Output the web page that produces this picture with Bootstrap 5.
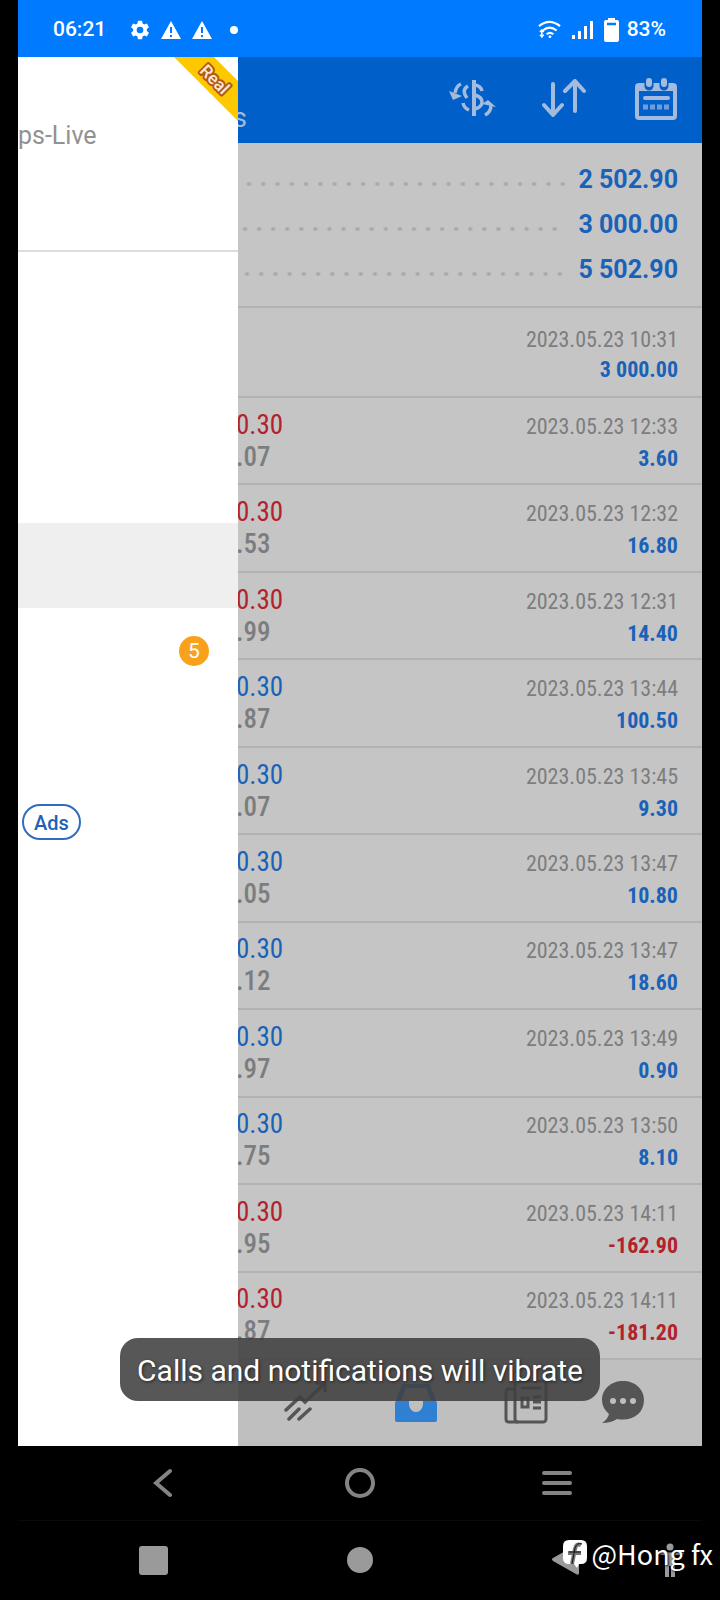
<!DOCTYPE html>
<html lang="en">
<head>
<meta charset="utf-8">
<meta name="viewport" content="width=device-width, initial-scale=1">
<title>History</title>
<link href="https://cdn.jsdelivr.net/npm/bootstrap@5.3.0/dist/css/bootstrap.min.css" rel="stylesheet">
<style>
body{background:#000;font-family:Roboto,"Noto Sans",sans-serif;min-height:100vh;padding:0}
.phone{min-height:100vh;margin:0 18px}
.status{background:#007aff;height:57px;padding:2px 36px 0 35px;color:#fff;font-size:21px;font-weight:500}
.status svg{flex:none}
.status .gap-icon{margin-left:11px}
.status .battery{margin-right:8px}
.app{background:#c5c5c5;overflow:hidden}
.topbar{background:#005fc8;height:86px;color:#a3bbdc}
.topbar .title{font-size:27px;margin:46px 0 0 215px;line-height:30px;font-weight:400}
.iconbtn{background:none;border:0;padding:0;color:inherit;display:flex;align-items:center;justify-content:center}
.topbar .iconbtn{width:92px;padding-bottom:4px}
.blue{color:#1a62b8}
.red{color:#b3222c}
.totals{padding:14px 24px 14px 220px;font-size:25px;font-weight:700;border-bottom:2px solid #b2b2b2}
.totals div{height:45px}
.leader{height:4px;margin-top:8px;background:radial-gradient(circle,#a8a8a8 0 1px,transparent 3px) 0 0/14px 4px space}
.lead-a{margin-left:4px;margin-right:8px}
.lead-b{margin-right:16px}
.lead-c{margin-left:2px;margin-right:11px}
.deals{font-family:"Roboto Condensed","Liberation Sans Narrow",Roboto,sans-serif;line-height:30px}
.deals li{flex:1 1 auto;padding:2px 24px 0 218px;border-bottom:2px solid #b2b2b2}
.deals li:first-child{flex:0 0 90px;padding-top:5px}
.lot{font-size:27px}
.price{font-size:27px;font-weight:500;color:#7c7d7f}
.when{font-size:22px;color:#7c7d7f}
.gain{font-size:22px;font-weight:700}
.tabs{background:#bfbfbf;height:86px;padding:0 37px 2px 233px;color:#555}
.tabs .iconbtn{width:110px}
.tabs .iconbtn:last-child{width:84px}
.drawer{left:0;top:0;bottom:0;width:220px;background:#fff;overflow:hidden}
.server{height:195px;border-bottom:2px solid #ddd;padding-top:64px;font-size:25px;line-height:30px;color:#929292}
.ribbon{top:0;right:0}
.menuitem{height:85px}
.chosen{background:#efefef}
.ads{width:59px;height:36px;margin-left:4px;margin-top:2px;padding-top:2px;border:2px solid #2f6dc0;border-radius:18px;color:#1f60b8;font-size:20px;font-weight:500;text-decoration:none}
.count{width:30px;height:30px;background:#f9a11b;color:#fff;font-size:21px;padding-top:2px;margin-right:29px}
.note{left:0;right:0;bottom:45px}
.note span{background:rgba(64,64,64,.88);color:#fff;font-size:30px;line-height:35px;padding:15px 17px 13px;border-radius:18px;text-shadow:1px 1px 3px #222;white-space:nowrap}
.sys{height:75px;padding:0 46px;color:#848484;border-bottom:1px solid #08080f}
.sys .iconbtn{flex:1}
.devicebar{margin:0 -18px}
.keys{height:79px;padding:0 34px 1px 139px;color:#9a9a9a}
.keys .person{margin-left:72px}
.wm{right:7px;bottom:26px;color:#fff;font:400 27px/40px "Noto Sans CJK SC",sans-serif;text-shadow:1px 1px 2px #000;gap:4px}
</style>
</head>
<body>
<div class="phone d-flex flex-column">
  <header class="status d-flex align-items-center">
    <span>06:21</span>
    <svg class="ms-4" width="20" height="20" viewBox="0 0 24 24" fill="#fff"><path fill-rule="evenodd" d="M9.500 1h5l.6 3.300 2 1.200 3.200-1.200 2.500 4.300-2.600 2.200v2.400l2.600 2.200-2.500 4.300-3.200-1.200-2 1.200-.6 3.300h-5l-.6-3.300-2-1.200-3.200 1.200-2.500-4.300 2.600-2.200v-2.400L1.200 8.600l2.500-4.300 3.200 1.200 2-1.200zM12 8a4 4 0 1 0 0 8 4 4 0 0 0 0-8z"/></svg>
    <svg class="gap-icon" width="20" height="20" viewBox="0 0 20 20"><path d="M10 1l10 18H0z" fill="#fff"/><path d="M10 7v6m0 2v2" stroke="#007aff" stroke-width="2"/></svg>
    <svg class="gap-icon" width="20" height="20" viewBox="0 0 20 20"><path d="M10 1l10 18H0z" fill="#fff"/><path d="M10 7v6m0 2v2" stroke="#007aff" stroke-width="2"/></svg>
    <svg class="ms-3" width="12" height="10"><circle cx="6" cy="5" r="4" fill="#fff"/></svg>
    <svg class="ms-auto" width="23" height="20" viewBox="0 0 24 20" fill="none" stroke="#fff" stroke-width="2.200"><path d="M1 6q11-9 22 0M5 10.500q7-6 14.500 0M9 14.500q3.500-3 7 0"/><path d="M4 10v8M2 12l2-2 2 2M2 15l2 2 2-2" stroke-width="1.600"/><circle cx="12.500" cy="17" r="1" fill="#fff" stroke-width="1"/></svg>
    <svg class="gap-icon" width="21" height="20" viewBox="0 0 21 20" fill="#fff"><path d="M0 15h3v4H0zM6 11h3v8H6zM12 6h3v13h-3zM18 1h3v18h-3z"/></svg>
    <svg class="gap-icon battery" width="15" height="24" viewBox="0 0 15 24"><path d="M4 0h7v2h2q2 0 2 2v18q0 2-2 2H2q-2 0-2-2V4q0-2 2-2h2z" fill="#fff"/><path d="M3 6h9" stroke="#007aff" stroke-width="2.500"/></svg>
    <span>83%</span>
  </header>

  <main class="app position-relative d-flex flex-column flex-grow-1">
    <div class="topbar d-flex">
      <h1 class="title me-auto">s</h1>
      <button class="iconbtn" aria-label="Symbols"><svg width="48" height="38" viewBox="0 0 48 38" fill="none" stroke="currentColor" stroke-width="4"><path d="M26 1v36"/><path d="M27 6q6 1 7 6M27 16q7 2 7 7t-7 7M20 7q-7 4-1 12M15 24q1 5 6 7" stroke-width="3.500"/><path d="M13 5q-5 2-6 9M37 36q6-3 6-10" stroke-width="3.500"/><path d="M1 12l13 5-9 4zM34 25l14 3-8-7z" fill="currentColor" stroke="none"/></svg></button>
      <button class="iconbtn" aria-label="Sort"><svg width="44" height="38" viewBox="0 0 44 38" fill="none" stroke="currentColor" stroke-width="4" stroke-linecap="round" stroke-linejoin="round"><path d="M11 5v31M2 26l9 10 9-10M33 32V3M23 12l10-10 9 10"/></svg></button>
      <button class="iconbtn" aria-label="Period"><svg width="42" height="44" viewBox="0 0 42 44" fill="none" stroke="currentColor"><rect x="2" y="9" width="38" height="33" rx="2" stroke-width="4"/><path d="M3 12h36" stroke-width="6"/><path d="M14 4v6M29 4v6" stroke="#005fc8" stroke-width="9" stroke-linecap="round"/><path d="M14 5v3M29 5v3" stroke-width="6" stroke-linecap="round"/><path d="M10 22h23" stroke-width="4" stroke-linecap="round"/><path d="M8 31h27" stroke="#6f9fdb" stroke-width="5" stroke-dasharray="5 2"/></svg></button>
    </div>

    <section class="totals blue">
      <div class="d-flex align-items-center"><span class="leader lead-a flex-grow-1"></span><span>2 502.90</span></div>
      <div class="d-flex align-items-center"><span class="leader lead-b flex-grow-1"></span><span>3 000.00</span></div>
      <div class="d-flex align-items-center"><span class="leader lead-c flex-grow-1"></span><span>5 502.90</span></div>
    </section>

    <ul class="deals list-unstyled mb-0 flex-grow-1 d-flex flex-column" id="deals"></ul>

    <nav class="tabs d-flex">
      <button class="iconbtn" aria-label="Trade"><svg width="44" height="44" viewBox="0 0 44 44" fill="none" stroke="currentColor" stroke-width="3.500" stroke-linecap="round"><path d="M2 30l14-13 5 5L41 3M33 3h8v8M5 39l10-10M15 39l11-10"/></svg></button>
      <button class="iconbtn" aria-label="History"><svg width="44" height="44" viewBox="0 0 44 44"><path d="M8 4h28l7 19v17q0 2-2 2H3q-2 0-2-2V23z" fill="#2f7fd3"/><path d="M12 8h20l5 13h-8v3a7 8 0 0 1-14 0v-3H7z" fill="#bfbfbf"/></svg></button>
      <button class="iconbtn" aria-label="News"><svg width="44" height="44" viewBox="0 0 44 44" fill="none" stroke="currentColor" stroke-width="3"><rect x="11" y="1" width="31" height="41" rx="3"/><path d="M12 9H5q-3 0-3 3v27q0 3 3 3h9M17 8h20M29 17h8M29 22h8M29 28h8M18 18h6v9h-6z"/></svg></button>
      <button class="iconbtn" aria-label="Chat"><svg width="44" height="44" viewBox="0 0 44 44"><path d="M22 1C10 1 1 9 1 20q0 8 7 14-1 5-7 9 9 0 15-4c16 3 27-6 27-19C43 9 34 1 22 1z" fill="currentColor"/><g fill="#bfbfbf"><circle cx="12" cy="21" r="3"/><circle cx="22" cy="21" r="3"/><circle cx="32" cy="21" r="3"/></g></svg></button>
    </nav>

    <aside class="drawer position-absolute">
      <div class="server">ps-Live
        <svg class="ribbon position-absolute" width="64" height="64" viewBox="0 0 64 64"><path d="M0 0h40l24 24v40z" fill="#fdc800"/><text x="40" y="28" transform="rotate(45 40 23)" text-anchor="middle" font-family="Roboto" font-weight="500" font-size="17" fill="#ffe9d0" stroke="#b05a1a" stroke-width="4" stroke-linejoin="round" paint-order="stroke">Real</text></svg>
      </div>
      <div class="menuitem"></div><div class="menuitem"></div><div class="menuitem mb-3"></div>
      <div class="menuitem chosen"></div>
      <div class="menuitem d-flex align-items-center justify-content-end"><span class="count rounded-circle d-flex align-items-center justify-content-center">5</span></div>
      <div class="menuitem"></div>
      <div class="menuitem d-flex align-items-center"><a href="#" class="ads d-flex align-items-center justify-content-center">Ads</a></div>
    </aside>

    <div class="note position-absolute d-flex justify-content-center" role="status"><span>Calls and notifications will vibrate</span></div>
  </main>

  <nav class="sys d-flex">
    <button class="iconbtn" aria-label="Back"><svg width="20" height="30" viewBox="0 0 20 30" fill="none" stroke="currentColor" stroke-width="4" stroke-linecap="round"><path d="M17 3L3 15l14 12"/></svg></button>
    <button class="iconbtn" aria-label="Home"><svg width="30" height="30"><circle cx="15" cy="15" r="13" fill="none" stroke="currentColor" stroke-width="4"/></svg></button>
    <button class="iconbtn" aria-label="Recent"><svg width="30" height="26" viewBox="0 0 30 26" stroke="currentColor" stroke-width="4" stroke-linecap="round"><path d="M2 3h26M2 13h26M2 23h26"/></svg></button>
  </nav>
  <div class="devicebar position-relative">
    <nav class="keys d-flex align-items-center">
      <div class="d-flex flex-grow-1 justify-content-between">
        <button class="iconbtn" aria-label="Overview"><svg width="29" height="30"><rect y="1" width="29" height="29" rx="3" fill="currentColor"/></svg></button>
        <button class="iconbtn" aria-label="Home"><svg width="28" height="30"><circle cx="14" cy="15" r="13" fill="currentColor"/></svg></button>
        <button class="iconbtn" aria-label="Back"><svg width="30" height="32" viewBox="0 0 30 32"><path d="M1 14L24 1q3-1 3 2v26q0 3-3 1L1 17q-2-2 0-3z" fill="currentColor"/></svg></button>
      </div>
      <button class="iconbtn person" aria-label="Accessibility"><svg width="32" height="34" viewBox="0 0 32 34" fill="currentColor"><circle cx="16" cy="4" r="3.500"/><path d="M2 8q14 3 28 0v3q-5 1-9 1v22h-4V23h-2v11h-4V12q-4 0-9-1z"/></svg></button>
    </nav>
    <div class="wm position-absolute d-flex align-items-center">
      <svg width="26" height="30" viewBox="0 0 26 30"><path d="M7 1h12q6 0 6 6v12q0 6-6 6h-2l-2 4-3-4H7q-6 0-6-6V7q0-6 6-6z" fill="#fff"/><path d="M19 6q-5-2-6 4l-3 15M6 14h13" fill="none" stroke="#777" stroke-width="4"/><path d="M20 5q-5-2-7 4l-3 16M7 13h12" fill="none" stroke="#111" stroke-width="1"/></svg>
      <span>@Hong fx</span>
    </div>
  </div>
</div>
<script>
const deals = [
  ["", "", "10:31", "3 000.00", ""],
  ["0.30", ".07", "12:33", "3.60", "red"],
  ["0.30", ".53", "12:32", "16.80", "red"],
  ["0.30", ".99", "12:31", "14.40", "red"],
  ["0.30", ".87", "13:44", "100.50", "blue"],
  ["0.30", ".07", "13:45", "9.30", "blue"],
  ["0.30", ".05", "13:47", "10.80", "blue"],
  ["0.30", ".12", "13:47", "18.60", "blue"],
  ["0.30", ".97", "13:49", "0.90", "blue"],
  ["0.30", ".75", "13:50", "8.10", "blue"],
  ["0.30", ".95", "14:11", "-162.90", "red"],
  ["0.30", ".87", "14:11", "-181.20", "red"]
];
document.getElementById("deals").innerHTML = deals.map(([lot, price, time, gain, side]) => `
  <li class="d-flex flex-column justify-content-center">
    <div class="d-flex justify-content-between align-items-baseline"><span class="lot ${side}">${lot}</span><span class="when">2023.05.23 ${time}</span></div>
    <div class="d-flex justify-content-between align-items-baseline"><span class="price">${price}</span><span class="gain ${gain[0] === "-" ? "red" : "blue"}">${gain}</span></div>
  </li>`).join("");
</script>
<script src="https://cdn.jsdelivr.net/npm/bootstrap@5.3.0/dist/js/bootstrap.bundle.min.js"></script>
</body>
</html>
